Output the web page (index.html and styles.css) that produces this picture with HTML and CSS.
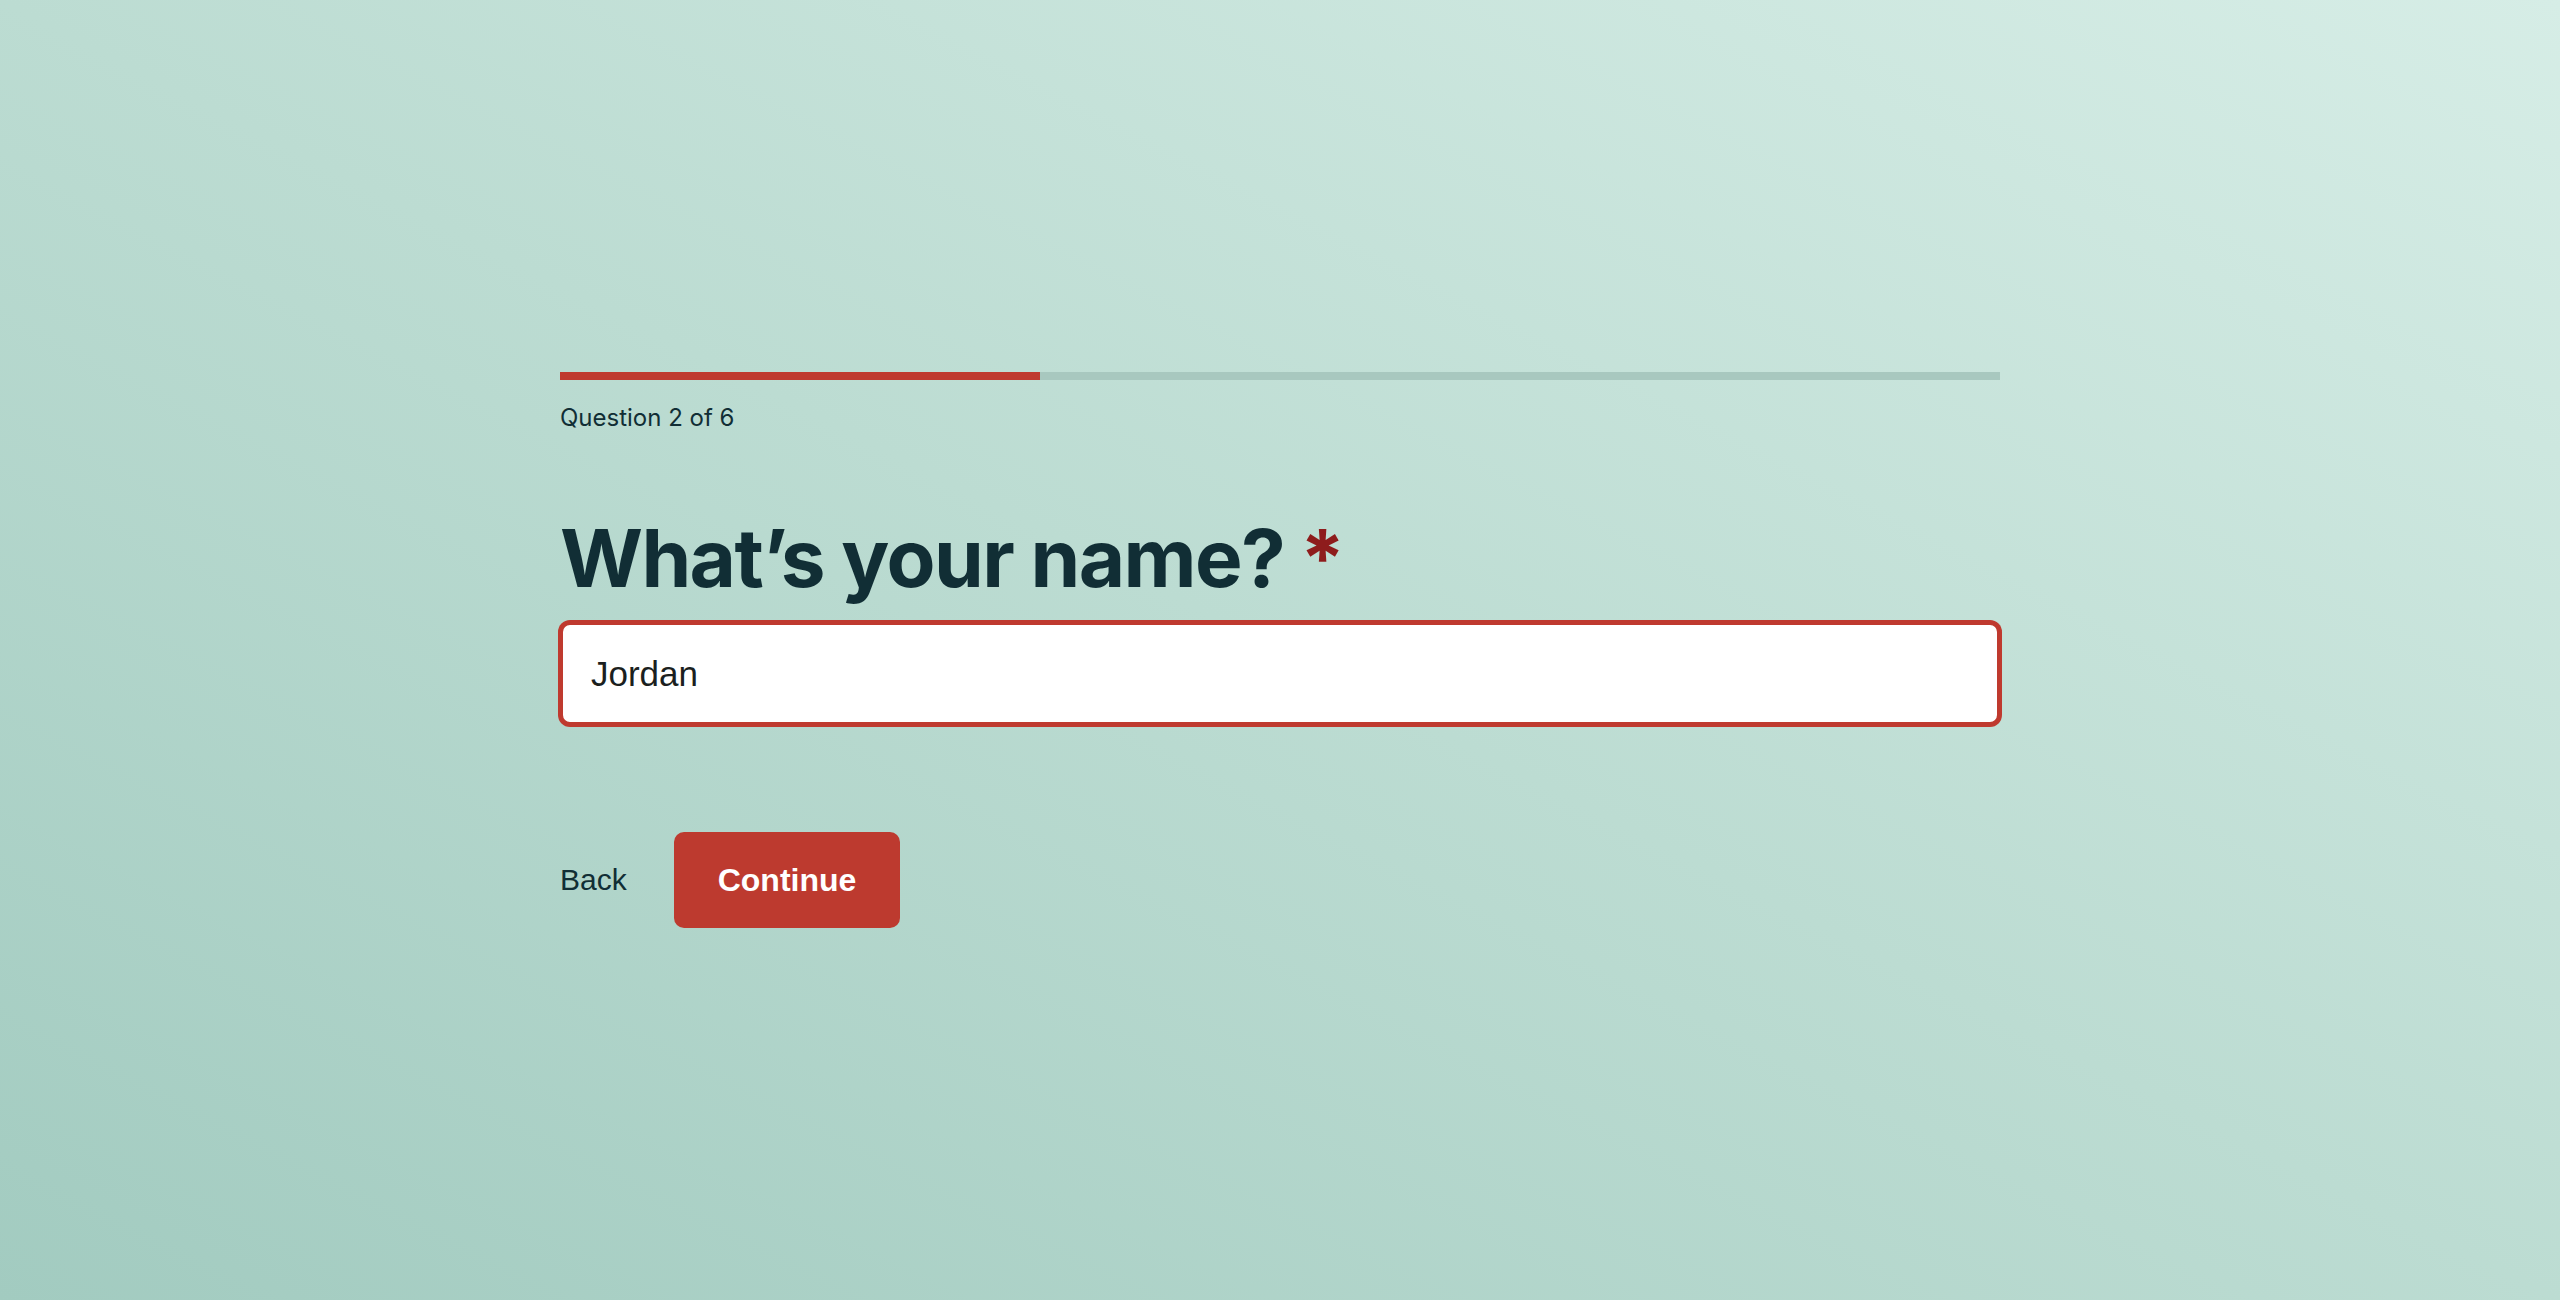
FILE: index.html
```html
<!DOCTYPE html>
<html lang="en">
<head>
<meta charset="utf-8">
<title>Question 2 of 6</title>
<link rel="stylesheet" href="styles.css">
</head>
<body>
<main class="page">
  <form class="quiz">
    <div class="progress"><div class="progress-fill" style="width:33.333%"></div></div>
    <p class="step">Question 2 of 6</p>
    <label class="question" for="name">What’s your name?<span class="req">*</span></label>
    <input class="answer" id="name" type="text" value="Jordan">
    <div class="actions">
      <button type="button" class="back">Back</button>
      <button type="button" class="continue">Continue</button>
    </div>
  </form>
</main>
</body>
</html>
```
FILE: styles.css
```css
* { box-sizing: border-box; }
html, body { margin: 0; padding: 0; }
body {
  min-height: 100vh;
  background: linear-gradient(to top right, #a2cbc0 0%, #bcdcd2 50%, #d6ede6 100%);
  color: #112e35;
  font-family: Inter, "Noto Sans", sans-serif;
}
.page {
  min-height: 100vh;
  display: flex;
  align-items: center;
  justify-content: center;
}
.quiz {
  width: 1440px;
  display: flex;
  flex-direction: column;
  align-items: stretch;
}
.progress {
  height: 8px;
  background: #a8c8bf;
}
.progress-fill {
  height: 100%;
  background: #bf3a2f;
}
.step {
  margin: 24px 0 0;
  font-size: 24px;
  line-height: 28px;
  font-weight: 400;
  letter-spacing: 0;
  color: #112e35;
}
.question {
  margin-top: 82px;
  font-size: 80px;
  line-height: 88px;
  font-weight: 700;
  letter-spacing: -0.02em;
  color: #112e35;
}
.req {
  color: #8e1c1c;
  margin-left: 16px;
}
.answer {
  margin-top: 20px;
  width: 100%;
  height: 103px;
  padding: 0 28px;
  border: 3px solid #bf3a2f;
  border-radius: 10px;
  box-shadow: 0 0 0 2px #bf3a2f;
  background: #ffffff;
  font-family: "Liberation Sans", Arial, sans-serif;
  font-size: 35px;
  color: #1b1f20;
  outline: none;
}
.actions {
  margin-top: 107px;
  display: flex;
  align-items: center;
  gap: 47px;
}
.back {
  padding: 0;
  border: 0;
  background: none;
  font-family: "Liberation Sans", Arial, sans-serif;
  font-size: 30px;
  color: #112e35;
  cursor: pointer;
}
.continue {
  height: 96px;
  padding: 0 44px;
  border: 0;
  border-radius: 10px;
  background: #bd3a2f;
  color: #ffffff;
  font-family: "Liberation Sans", Arial, sans-serif;
  font-size: 32px;
  font-weight: 700;
  cursor: pointer;
}
```
